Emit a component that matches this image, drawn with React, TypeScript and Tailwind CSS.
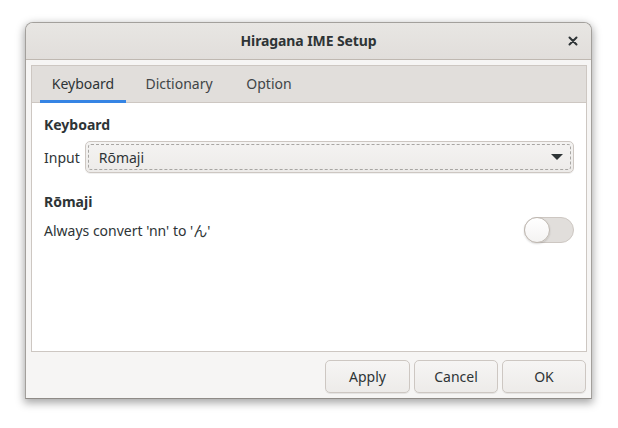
import React from "react";

export default function App() {
  const font = { fontFamily: '"Noto Sans", "Noto Sans CJK JP", sans-serif' };
  return (
    <div className="w-[618px] h-[428px] bg-white pl-[25px] pt-[22px] text-[#2e3436]" style={font}>
      <div className="w-[567px] h-[377px] flex flex-col rounded-t-[8px] border border-[#a3a09c] border-b-[#8f8b87] bg-[#f6f5f4] shadow-[0_3px_9px_1px_rgba(0,0,0,0.35)] overflow-hidden">
        {/* Header bar */}
        <div className="h-[37px] shrink-0 flex items-center relative bg-gradient-to-b from-[#e8e6e3] to-[#e1dedb] border-b border-[#bfb8b1]">
          <div className="flex-1 text-center text-[14px] font-bold leading-none tracking-[-0.1px]">Hiragana IME Setup</div>
          <div className="absolute right-[13px] top-[13px]">
            <svg width="10" height="10" viewBox="0 0 10 10">
              <path d="M1.5 1.5 L8.5 8.5 M8.5 1.5 L1.5 8.5" stroke="#2e3436" strokeWidth="2" strokeLinecap="round" />
            </svg>
          </div>
        </div>
        {/* Notebook */}
        <div className="mt-[5px] ml-[5px] mr-[4px] h-[287px] shrink-0 flex flex-col border border-[#cdc7c2] bg-white">
          <div className="h-[37px] shrink-0 flex items-stretch bg-[#e1dedb] border-b border-[#cdc7c2] pl-[8px]">
            <div className="relative w-[86px] flex items-center justify-center text-[14px] pb-[1px]">
              Keyboard
              <div className="absolute left-0 right-0 bottom-[-1px] h-[3px] bg-[#3584e4]" />
            </div>
            <div className="w-[106px] flex items-center justify-center text-[14px] text-[#3f4547] pb-[1px]">Dictionary</div>
            <div className="w-[74px] flex items-center justify-center text-[14px] text-[#3f4547] pb-[1px]">Option</div>
          </div>
          <div className="flex flex-col px-[12px] pt-[12px]">
            <div className="text-[14px] font-bold leading-[20px]">Keyboard</div>
            <div className="flex items-center mt-[6px] gap-[4px]">
              <span className="text-[14px] pr-[1px]">Input</span>
              <div className="flex-1 h-[32px] rounded-[5px] border border-[#cdc7c2] bg-gradient-to-b from-[#f4f3f2] to-[#edebe9] p-[2px] shadow-[0_1px_0_rgba(0,0,0,0.06)]">
                <div className="h-full rounded-[3px] border border-dashed border-[#a8a6a3] flex items-center pl-[10px] pr-[7px]">
                  <span className="flex-1 text-[14px]">Rōmaji</span>
                  <svg width="12" height="8" viewBox="0 0 12 8">
                    <path d="M0 1 L12 1 L6 7 Z" fill="#2e3436" />
                  </svg>
                </div>
              </div>
            </div>
            <div className="text-[14px] font-bold leading-[20px] mt-[19px]">Rōmaji</div>
            <div className="flex items-center justify-between mt-[5px]">
              <span className="text-[14px] pt-[1px]">Always convert 'nn' to 'ん'</span>
              <div className="w-[50px] h-[26px] rounded-full border border-[#cdc7c2] bg-[#e1dedb] relative">
                <div className="absolute left-[-1px] top-[-1px] w-[26px] h-[26px] rounded-full border border-[#bfb8b1] bg-gradient-to-b from-white to-[#f4f3f2] shadow-[0_1px_2px_rgba(0,0,0,0.15)]" />
              </div>
            </div>
          </div>
        </div>
        {/* Action area */}
        <div className="flex justify-end gap-[4px] pr-[5px] pt-[8px]">
          <button className="w-[85px] h-[33px] rounded-[5px] border border-[#cdc7c2] bg-gradient-to-b from-[#f6f5f4] to-[#edebe9] text-[14px] shadow-[0_1px_0_rgba(0,0,0,0.07)]">Apply</button>
          <button className="w-[84px] h-[33px] rounded-[5px] border border-[#cdc7c2] bg-gradient-to-b from-[#f6f5f4] to-[#edebe9] text-[14px] shadow-[0_1px_0_rgba(0,0,0,0.07)]">Cancel</button>
          <button className="w-[84px] h-[33px] rounded-[5px] border border-[#cdc7c2] bg-gradient-to-b from-[#f6f5f4] to-[#edebe9] text-[14px] shadow-[0_1px_0_rgba(0,0,0,0.07)]">OK</button>
        </div>
      </div>
    </div>
  );
}
